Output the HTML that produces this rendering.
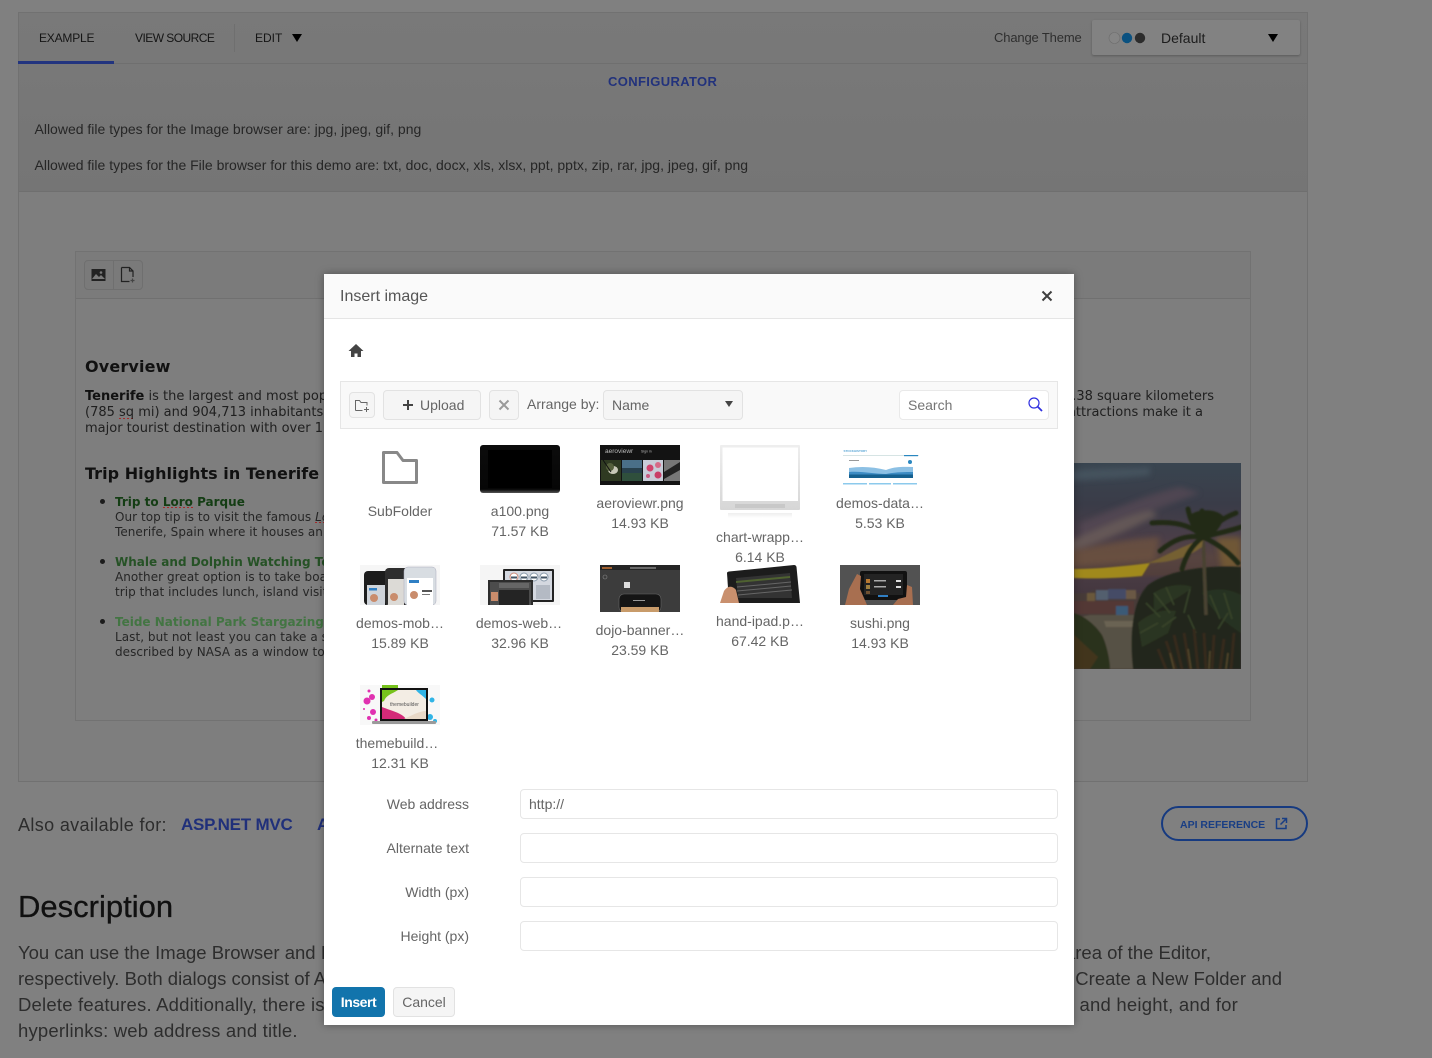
<!DOCTYPE html>
<html lang="en"><head><meta charset="utf-8"><title>Insert image</title>
<style>
html,body{margin:0;padding:0;width:1432px;height:1058px;overflow:hidden;background:#808080}
body{position:relative;font-family:"Liberation Sans",Arial,sans-serif;color:#333}
.a{position:absolute;box-sizing:border-box}
.t{position:absolute;white-space:nowrap;line-height:20px;height:20px}
.v{font-family:"DejaVu Sans",Verdana,sans-serif}
.sp{background:repeating-linear-gradient(90deg,#a52a2a 0 2px,transparent 2px 4px) 0 calc(100% - 1px)/100% 1px no-repeat}
.m{color:#656565;font-size:14px;text-align:center;width:110px}
.lb{color:#656565;font-size:14px;text-align:right;width:140px;left:329px}
.inp{position:absolute;left:520px;width:538px;height:30px;border:1px solid #e6e6e6;border-radius:4px;background:#fff;box-sizing:border-box}
.btn{position:absolute;box-sizing:border-box;border:1px solid #e2e2e2;border-radius:4px;background:#f5f5f5}
svg{position:absolute;display:block}
.th{filter:blur(.35px)}
</style></head>
<body>
<!-- background page -->
<div class="a" style="left:18px;top:12px;width:1290px;height:770px;border:1px solid #717171;background:#7e7e7e"></div>
<div class="a" style="left:19px;top:13px;width:1288px;height:179px;background:linear-gradient(#797979,#757575);border-bottom:1px solid #6f6f6f"></div>
<div class="a" style="left:19px;top:63px;width:1288px;height:1px;background:#6f6f6f"></div>
<div class="a" style="left:18px;top:61px;width:96px;height:3px;background:#22347f"></div>
<div class="a" style="left:234px;top:24px;width:1px;height:28px;background:#6f6f6f"></div>
<div class="t" style="left:39px;top:28px;font-size:12px;color:#151515;letter-spacing:-.2px">EXAMPLE</div>
<div class="t" style="left:135px;top:28px;font-size:12px;color:#151515;letter-spacing:-.55px">VIEW SOURCE</div>
<div class="t" style="left:255px;top:28px;font-size:12px;color:#151515">EDIT</div>
<svg style="left:291px;top:33px" width="12" height="10"><path d="M1 1h10l-5 8z" fill="#000"/></svg>
<div class="t" style="left:608px;top:72px;font-size:13px;font-weight:bold;color:#22327c;letter-spacing:.36px">CONFIGURATOR</div>
<div class="t" style="left:34.500px;top:119px;font-size:14px;color:#262626">Allowed file types for the Image browser are: jpg, jpeg, gif, png</div>
<div class="t" style="left:34.500px;top:155px;font-size:14px;color:#262626">Allowed file types for the File browser for this demo are: txt, doc, docx, xls, xlsx, ppt, pptx, zip, rar, jpg, jpeg, gif, png</div>
<div class="t" style="left:994px;top:28px;font-size:13px;color:#2e2e2e;letter-spacing:-.15px">Change Theme</div>
<div class="a" style="left:1092px;top:20px;width:208px;height:35px;background:#828282;border-radius:2px;box-shadow:0 1px 2px rgba(0,0,0,.25)"></div>
<svg style="left:1107px;top:31px" width="40" height="14"><circle cx="7.500" cy="7" r="5.500" fill="#858585" stroke="#6e6e6e" stroke-width=".6"/><circle cx="20" cy="7" r="5.200" fill="#0a5180"/><circle cx="33" cy="7" r="5.200" fill="#2c2c2c"/></svg>
<div class="t" style="left:1161px;top:28px;font-size:14px;color:#1c1c1c">Default</div>
<svg style="left:1267px;top:33px" width="12" height="10"><path d="M1 1h10l-5 8z" fill="#000"/></svg>

<!-- editor -->
<div class="a" style="left:75px;top:251px;width:1176px;height:470px;border:1px solid #727272"></div>
<div class="a" style="left:76px;top:252px;width:1174px;height:47px;background:#7b7b7b;border-bottom:1px solid #707070"></div>
<div class="a" style="left:84px;top:260px;width:59px;height:30px;background:#7a7a7a;border:1px solid #6f6f6f;border-radius:4px"></div>
<div class="a" style="left:113px;top:261px;width:1px;height:28px;background:#6f6f6f"></div>
<svg style="left:90px;top:267px" width="18" height="16"><rect x="1.500" y="2" width="14" height="12" fill="#222"/><circle cx="11" cy="5.500" r="1.300" fill="#7a7a7a"/><path d="M2 12l4-5 3 3 2-2 4 4z" fill="#7a7a7a"/></svg>
<svg style="left:119px;top:266px" width="20" height="18" fill="none" stroke="#222" stroke-width="1.200"><path d="M2.500 1.500h8l3.500 3.500v6M2.500 1.500v14h8M10.500 1.500v3.500h3.500"/><path d="M13.500 12.500v4M11.500 14.500h4" stroke="#444"/></svg>

<div class="t v" style="left:85px;top:357px;font-size:16px;font-weight:bold;color:#111;letter-spacing:.15px">Overview</div>
<div class="t v" style="left:85px;top:387px;font-size:13px;color:#1f1f1f"><b style="color:#111">Tenerife</b> is the largest and most populous island</div>
<div class="t v" style="left:85px;top:403px;font-size:13px;color:#1f1f1f">(785 <span class="sp">sq</span> mi) and 904,713 inhabitants, it is</div>
<div class="t v" style="left:85px;top:419px;font-size:13px;color:#1f1f1f">major tourist destination with over 1</div>
<div class="t v" style="left:85px;top:464px;font-size:16px;font-weight:bold;color:#111;letter-spacing:.03px">Trip Highlights in Tenerife</div>
<div class="a" style="left:100px;top:499px;width:5px;height:5px;border-radius:50%;background:#1c1c1c"></div>
<div class="t v" style="left:115px;top:492px;font-size:12px;font-weight:bold;color:#143d14">Trip to <span class="sp">Loro</span> Parque</div>
<div class="t v" style="left:115px;top:507px;font-size:12px;color:#262626;letter-spacing:.05px">Our top tip is to visit the famous <i class="sp">Loro</i></div>
<div class="t v" style="left:115px;top:522px;font-size:12px;color:#262626;letter-spacing:.05px">Tenerife, Spain where it houses an</div>
<div class="a" style="left:100px;top:559px;width:5px;height:5px;border-radius:50%;background:#1c1c1c"></div>
<div class="t v" style="left:115px;top:552px;font-size:12px;font-weight:bold;color:#265226">Whale and Dolphin Watching Tour</div>
<div class="t v" style="left:115px;top:567px;font-size:12px;color:#262626;letter-spacing:.05px">Another great option is to take boat</div>
<div class="t v" style="left:115px;top:582px;font-size:12px;color:#262626;letter-spacing:.05px">trip that includes lunch, island visit</div>
<div class="a" style="left:100px;top:619px;width:5px;height:5px;border-radius:50%;background:#1c1c1c"></div>
<div class="t v" style="left:115px;top:612px;font-size:12px;font-weight:bold;color:#437543">Teide National Park Stargazing</div>
<div class="t v" style="left:115px;top:627px;font-size:12px;color:#262626;letter-spacing:.05px">Last, but not least you can take a s</div>
<div class="t v" style="left:115px;top:642px;font-size:12px;color:#262626;letter-spacing:.05px">described by NASA as a window to</div>
<div class="t v" style="right:218px;top:387px;font-size:13px;color:#1f1f1f">2,034.38 square kilometers</div>
<div class="t v" style="right:229px;top:403px;font-size:13px;color:#1f1f1f">attractions make it a</div>

<!-- landscape -->
<svg style="left:1070px;top:463px" width="171" height="206" viewBox="0 0 171 206">
<defs><linearGradient id="sky" gradientUnits="userSpaceOnUse" x1="0" y1="0" x2="0" y2="206"><stop offset="0" stop-color="#394550"/><stop offset=".2" stop-color="#3a3c48"/><stop offset=".36" stop-color="#4a3e48"/><stop offset=".46" stop-color="#574440"/><stop offset=".54" stop-color="#523f3c"/><stop offset=".56" stop-color="#483a42"/><stop offset=".65" stop-color="#43373f"/><stop offset="1" stop-color="#3f3532"/></linearGradient>
<filter id="b"><feGaussianBlur stdDeviation="3"/></filter><filter id="b1"><feGaussianBlur stdDeviation=".9"/></filter></defs>
<rect width="171" height="206" fill="url(#sky)"/>
<g filter="url(#b)" opacity=".75"><path d="M0 8C30 4 60 6 80 4V12C50 16 25 16 0 18z" fill="#4a5864"/><path d="M10 60C40 48 80 30 110 24L130 30C90 44 50 62 10 74z" fill="#564a55"/><path d="M0 78C30 66 55 52 80 48L88 52C60 66 30 80 0 88z" fill="#6e605c"/><path d="M0 88C25 84 55 76 90 74L84 98C50 100 25 102 0 104z" fill="#6e5240"/><path d="M146 74H171V106H152z" fill="#7a5f30"/></g>
<path d="M4 106C30 106 55 103 80 100L72 113C50 115 25 116 4 115z" fill="#a0891a" filter="url(#b1)"/>
<g filter="url(#b1)">
<path d="M0 206V130h18l6-3h30l6 3h10v76z" fill="#463b39"/>
<rect x="17" y="130" width="8" height="10" fill="#6a583a"/><rect x="26" y="127" width="12" height="10" fill="#525e6e"/><rect x="38" y="126" width="18" height="10" fill="#444c66"/><rect x="56" y="127" width="10" height="9" fill="#6a5844"/>
<path d="M4 138h60v13H4z" fill="#523934"/><rect x="46" y="143" width="12" height="9" fill="#3a5a76"/>
<path d="M20 152h50l10 54H0V156z" fill="#575145"/>
<path d="M34 158h32l4 6H36z" fill="#6b6453"/>
<path d="M4 206V150C12 152 24 160 32 172 36 180 40 196 40 206z" fill="#2a301c"/>
<path d="M4 172l24 22-8 12H4z" fill="#43361e"/>
<path d="M63 206C60 180 60 140 78 122 100 106 140 102 171 104V206z" fill="#22281a"/>
<path d="M84 130C96 122 112 120 122 124 112 134 98 138 84 150z" fill="#2b3522"/>
<path d="M132 130C146 124 160 126 171 132V170C155 160 142 148 132 130z" fill="#273220"/>
<path d="M68 160C80 150 92 146 106 148L98 170 72 184z" fill="#2a3521"/>
<g fill="none" stroke="#39452c" stroke-width="1.500"><path d="M76 140l14 14M84 130l16 20M96 124l8 18M120 126l-6 24M140 132l10 24M154 130l8 26M70 170l18-10M92 164l14-10M118 152l8 18M158 150l-10 16"/></g>
<path d="M96 178l10 28M104 172l8 34M114 170l6 36M124 166l4 40M134 170l2 36M144 172l-2 34M154 176l-4 30M164 170l-3 36M88 186l8 20" stroke="#36291a" stroke-width="3"/>
<path d="M100 190l4 16M118 186l3 20M140 188l-1 18M158 190l-2 16" stroke="#54462a" stroke-width="1.500"/>
<path d="M133 70l3 82" stroke="#484330" stroke-width="3.500"/>
<path d="M78 100C90 96 110 84 133 76L132 84C116 96 96 100 78 100z" fill="#756030"/>
<g fill="none" stroke="#232913" stroke-width="5" stroke-linecap="round">
<path d="M133 74C122 62 104 58 82 60"/><path d="M133 74C124 66 120 56 118 46"/><path d="M133 74C134 64 136 54 132 48"/><path d="M133 74C142 64 150 56 166 50"/><path d="M133 74C148 70 160 68 171 64"/><path d="M133 74C116 72 104 76 90 88"/><path d="M133 74C146 80 158 88 168 100"/><path d="M133 74C122 82 116 92 112 106"/>
</g>
<path d="M118 54C124 46 146 44 154 54 150 68 140 76 130 76 124 70 120 62 118 54z" fill="#232913"/>
</g>
</svg>

<!-- lower page -->
<div class="t" style="left:18px;top:815px;font-size:18px;color:#2d2d2d;letter-spacing:.36px">Also available for:</div>
<div class="t" style="left:181px;top:815px;font-size:17px;font-weight:bold;color:#20307a;letter-spacing:-.22px">ASP.NET MVC</div>
<div class="t" style="left:317px;top:815px;font-size:17px;font-weight:bold;color:#20307a">A</div>
<div class="a" style="left:1161px;top:806px;width:147px;height:35px;border:2px solid #163a80;border-radius:18px"></div>
<div class="t" style="left:1180px;top:815px;font-size:10.500px;font-weight:bold;color:#193e84">API REFERENCE</div>
<svg style="left:1275px;top:817px" width="13" height="13" fill="none" stroke="#193e84" stroke-width="1.500"><path d="M5 2H1.500v9.500H11V8"/><path d="M5.500 7.500L11 2M7 1.500h4.500V6"/></svg>
<div class="t" style="left:18px;top:889px;height:36px;line-height:36px;font-size:31px;color:#101010;-webkit-text-stroke:.3px #101010">Description</div>
<div class="t" style="left:18px;top:943px;font-size:18.500px;color:#2d2d2d">You can use the Image Browser and Image</div>
<div class="t" style="left:18px;top:969px;font-size:18.500px;color:#2d2d2d">respectively. Both dialogs consist of A</div>
<div class="t" style="left:18px;top:995px;font-size:18.500px;color:#2d2d2d;letter-spacing:.2px">Delete features. Additionally, there is</div>
<div class="t" style="left:18px;top:1021px;font-size:18.500px;color:#2d2d2d;letter-spacing:.18px">hyperlinks: web address and title.</div>
<div class="t" style="right:221px;top:943px;font-size:18.500px;color:#2d2d2d">the area of the Editor,</div>
<div class="t" style="right:150px;top:969px;font-size:18.500px;color:#2d2d2d">Create a New Folder and</div>
<div class="t" style="right:194px;top:995px;font-size:18.500px;color:#2d2d2d;letter-spacing:.22px">and height, and for</div>

<!-- modal -->
<div class="a" style="left:324px;top:274px;width:750px;height:751px;background:#fff;box-shadow:0 0 8px rgba(0,0,0,.35)"></div>
<div class="a" style="left:324px;top:274px;width:750px;height:45px;background:#fafafa;border-bottom:1px solid #e5e5e5"></div>
<div class="t" style="left:340px;top:287px;font-size:16px;color:#555">Insert image</div>
<svg style="left:1040px;top:289px" width="14" height="14" stroke="#3f3f3f" stroke-width="2"><path d="M2.500 2.500l9 9M11.500 2.500l-9 9"/></svg>
<svg style="left:348px;top:343px" width="16" height="15"><path d="M8 1L.5 8H3v6h3.500v-3.500h3V14H13V8h2.500z" fill="#444"/></svg>

<div class="a" style="left:340px;top:381px;width:718px;height:48px;background:#f9f9f9;border:1px solid #e6e6e6"></div>
<div class="btn" style="left:349px;top:392px;width:26px;height:26px"></div>
<svg style="left:354px;top:398px" width="17" height="15" fill="none" stroke="#666" stroke-width="1"><path d="M1.500 12.500v-10h4l1.500 2h6v3M1.500 12.500h7"/><path d="M12.500 9v5M10 11.500h5"/></svg>
<div class="btn" style="left:383px;top:390px;width:98px;height:30px"></div>
<svg style="left:402px;top:399px" width="12" height="12"><path d="M6 1v10M1 6h10" stroke="#444" stroke-width="2"/></svg>
<div class="t" style="left:420px;top:395px;font-size:14px;color:#656565">Upload</div>
<div class="btn" style="left:489px;top:390px;width:30px;height:30px"></div>
<svg style="left:498px;top:399px" width="12" height="12" stroke="#9a9a9a" stroke-width="2"><path d="M1.500 1.500l9 9M10.500 1.500l-9 9"/></svg>
<div class="t" style="left:527px;top:394px;font-size:14px;color:#656565">Arrange by:</div>
<div class="btn" style="left:603px;top:390px;width:140px;height:30px"></div>
<div class="t" style="left:612px;top:395px;font-size:14px;color:#656565">Name</div>
<svg style="left:724px;top:400px" width="10" height="8"><path d="M1 1h8l-4 6z" fill="#444"/></svg>
<div class="a" style="left:899px;top:390px;width:150px;height:30px;background:#fff;border:1px solid #e9e9e9;border-radius:4px"></div>
<div class="t" style="left:908px;top:395px;font-size:14px;color:#757575">Search</div>
<svg style="left:1027px;top:396px" width="17" height="18" fill="none" stroke="#3030e0"><circle cx="7" cy="7" r="5" stroke-width="1.200"/><path d="M10.500 10.500l4.500 4.500" stroke-width="1.800"/></svg>

<!-- file items -->
<svg style="left:380px;top:449px" width="40" height="38" fill="none" stroke="#888" stroke-width="3" stroke-linejoin="round"><path d="M3.500 3.500H17l6 8H36.500V33.500H3.500z"/></svg>
<div class="t m" style="left:345px;top:501px">SubFolder</div>

<svg class="th" style="left:480px;top:445px" width="80" height="48"><defs><linearGradient id="ta" x1="0" y1="0" x2="0" y2="1"><stop offset="0" stop-color="#0c0c0c"/><stop offset=".92" stop-color="#060606"/><stop offset="1" stop-color="#555"/></linearGradient></defs><rect width="80" height="48" rx="3" fill="url(#ta)"/><rect x="8" y="5" width="64" height="38" fill="#000"/></svg>
<div class="t m" style="left:465px;top:501px">a100.png</div><div class="t m" style="left:465px;top:521px">71.57 KB</div>

<svg class="th" style="left:600px;top:445px" width="80" height="40"><rect width="80" height="40" fill="#131313"/><text x="5" y="8" font-size="6.500" fill="#bbb" font-family="Liberation Sans">aeroviewr</text><text x="41" y="7.500" font-size="3.500" fill="#bbb" font-family="Liberation Sans">Sign in</text><rect x="1" y="15" width="20" height="21" fill="#2f3a22"/><ellipse cx="13" cy="25" rx="5" ry="4" fill="#c8c8b8"/><circle cx="10" cy="22" r="4" fill="#55603c"/><path d="M3 15l8 12" stroke="#111"/><rect x="22" y="15" width="20" height="21" fill="#4a6f88"/><rect x="22" y="23" width="20" height="5" fill="#28404c"/><rect x="22" y="28" width="20" height="8" fill="#2f4f3c"/><rect x="43" y="15" width="20" height="21" fill="#c8ccd8"/><circle cx="50" cy="23" r="3.500" fill="#d0446e"/><circle cx="58" cy="30" r="3.500" fill="#c93f68"/><circle cx="58" cy="20" r="3" fill="#d66a88"/><circle cx="48" cy="31" r="2" fill="#c85a80"/><rect x="64" y="15" width="16" height="21" fill="#777"/><path d="M64 27l16-10v8l-16 9z" fill="#222"/></svg>
<div class="t m" style="left:585px;top:493px">aeroviewr.png</div><div class="t m" style="left:585px;top:513px">14.93 KB</div>

<svg class="th" style="left:720px;top:445px" width="80" height="73"><defs><linearGradient id="ts" x1="0" y1="0" x2="0" y2="1"><stop offset="0" stop-color="#eee"/><stop offset="1" stop-color="#fff"/></linearGradient><linearGradient id="tm" x1="0" y1="0" x2="0" y2="1"><stop offset="0" stop-color="#eeeeee"/><stop offset="1" stop-color="#d6d6d6"/></linearGradient></defs><rect width="80" height="65" rx="1" fill="url(#tm)"/><rect x="2.500" y="2.500" width="75.500" height="53.500" fill="#fff"/><rect x="15" y="59" width="50" height="4" fill="#c8c8c8"/><rect x="8" y="68" width="64" height="5" fill="url(#ts)"/></svg>
<div class="t m" style="left:705px;top:527px">chart-wrapp…</div><div class="t m" style="left:705px;top:547px">6.14 KB</div>

<svg class="th" style="left:840px;top:447px" width="80" height="38"><rect x="3" y="1" width="76" height="37" fill="#fff"/><text x="3.500" y="5" font-size="3" fill="#5aa6d6" font-weight="bold" font-family="Liberation Sans">STOCKHISTORY</text><rect x="3" y="8" width="76" height=".8" fill="#cdd"/><rect x="64" y="8" width="14" height="1.200" fill="#2a87c0"/><rect x="9" y="13" width="10" height="1" fill="#999"/><circle cx="70" cy="15" r="2" fill="#2a87c0"/><path d="M9 21C22 19 34 20 46 23 56 19 65 20 73 20V31H9z" fill="#8cc0e4"/><path d="M9 25C22 24 34 27 46 27 56 25 65 25 73 25V31H9z" fill="#3d8cc4"/><path d="M9 27.500H73V31H9z" fill="#15608f"/><rect x="3" y="36" width="24" height="1.500" fill="#8ccaec"/><rect x="29" y="36" width="22" height="1.500" fill="#8ccaec"/><rect x="53" y="36" width="24" height="1.500" fill="#8ccaec"/></svg>
<div class="t m" style="left:825px;top:493px">demos-data…</div><div class="t m" style="left:825px;top:513px">5.53 KB</div>

<svg class="th" style="left:360px;top:565px" width="80" height="40"><rect width="80" height="40" fill="#f6f6f6"/><rect x="4" y="6" width="26" height="34" rx="4" fill="#1c1c1c"/><rect x="7" y="20" width="18" height="20" fill="#cfd4da"/><rect x="25" y="3" width="24" height="37" rx="4" fill="#2e2e2e"/><rect x="28" y="14" width="16" height="26" fill="#dcdad6"/><circle cx="34" cy="32" r="4" fill="#c98c6c"/><rect x="44" y="2" width="32" height="38" rx="4" fill="#d8dde2" stroke="#aab" stroke-width=".5"/><rect x="47" y="13" width="26" height="27" fill="#fff"/><rect x="49" y="15" width="10" height="3" fill="#2f7fc4"/><circle cx="54" cy="30" r="4" fill="#c98c6c"/><rect x="62" y="25" width="10" height="2" fill="#555"/><rect x="62" y="29" width="8" height="1" fill="#777"/><rect x="9" y="23" width="8" height="2.500" fill="#2f7fc4"/><circle cx="14" cy="33" r="4" fill="#c98c6c"/></svg>
<div class="t m" style="left:345px;top:613px">demos-mob…</div><div class="t m" style="left:345px;top:633px">15.89 KB</div>

<svg class="th" style="left:480px;top:565px" width="80" height="40"><rect width="80" height="40" fill="#f5f5f5"/><rect x="23" y="4" width="51" height="33" rx="1" fill="#222"/><rect x="25" y="6" width="47" height="29" fill="#d4d8e0"/><circle cx="34" cy="12" r="4" fill="#fff" stroke="#c87"/><circle cx="44" cy="12" r="4" fill="#fff" stroke="#89a"/><circle cx="54" cy="12" r="4" fill="#fff" stroke="#89a"/><circle cx="64" cy="12" r="4" fill="#fff" stroke="#89a"/><path d="M31 12.500h6M41 12.500h6M51 12.500h6M61 12.500h6" stroke="#456" stroke-width="2"/><rect x="8" y="15" width="45" height="25" fill="#2c2c2c"/><rect x="10" y="17" width="41" height="23" fill="#4c4c4c"/><rect x="19" y="25" width="30" height="15" fill="#242424"/><rect x="19" y="18" width="30" height="5" fill="#666"/><rect x="11" y="27" width="7" height="9" fill="#c98c6c"/><rect x="56" y="20" width="14" height="14" fill="#b4bac4"/></svg>
<div class="t m" style="left:464px;top:613px">demos-web…</div><div class="t m" style="left:465px;top:633px">32.96 KB</div>

<svg class="th" style="left:600px;top:565px" width="80" height="47"><rect width="80" height="47" fill="#3c3c3c"/><rect width="80" height="5" fill="#242424"/><rect x="30" y="2" width="26" height="2" fill="#6a6a6a"/><rect x="2" y="2" width="10" height="2" fill="#a06030"/><circle cx="5" cy="12" r="2" fill="none" stroke="#888" stroke-width=".6"/><rect x="24" y="17" width="6" height="6" fill="#ddd"/><rect x="19" y="29" width="42" height="18" rx="5" fill="#151515" stroke="#666" stroke-width=".6"/><rect x="21" y="42" width="38" height="5" fill="#c89b6a"/><rect x="33" y="35" width="12" height="1" fill="#999"/></svg>
<div class="t m" style="left:585px;top:620px">dojo-banner…</div><div class="t m" style="left:585px;top:640px">23.59 KB</div>

<svg class="th" style="left:720px;top:565px" width="80" height="38"><path d="M7 8Q7 7 9 6.500L74 0Q76 0 76.500 2L80 38H9z" fill="#1c1c1c"/><path d="M16 13L70 8 72 33H18z" fill="#333"/><path d="M16 16L70 11V13L16 18z" fill="#4f6230"/><path d="M17 22L71 17M17 26L71 21M18 30L72 25" stroke="#666" stroke-width="1"/><path d="M0 38L4 26C8 20 13 21 16 25L19 38z" fill="#c9906e"/></svg>
<div class="t m" style="left:705px;top:611px">hand-ipad.p…</div><div class="t m" style="left:705px;top:631px">67.42 KB</div>

<svg class="th" style="left:840px;top:565px" width="80" height="40"><rect width="80" height="40" fill="#525252"/><rect x="20" y="6" width="47" height="29" rx="2" fill="#111"/><rect x="24" y="9" width="39" height="21" fill="#232323"/><rect x="26" y="14" width="4" height="4" fill="#b87830"/><rect x="26" y="20" width="4" height="4" fill="#a08040"/><rect x="26" y="26" width="4" height="3" fill="#705030"/><rect x="34" y="15" width="12" height="1.500" fill="#aaa"/><rect x="34" y="21" width="12" height="1.500" fill="#aaa"/><rect x="56" y="15" width="5" height="2" fill="#ddd"/><rect x="56" y="21" width="5" height="2" fill="#ddd"/><rect x="38" y="30" width="10" height="2" fill="#2f7fc4"/><path d="M5 40L9 24 17 9 21 11 20 24 24 33 27 40z" fill="#a86f50"/><path d="M53 40L58 34 66 32 67 20 72 22 73 40z" fill="#a86f50"/></svg>
<div class="t m" style="left:825px;top:613px">sushi.png</div><div class="t m" style="left:825px;top:633px">14.93 KB</div>

<svg class="th" style="left:360px;top:685px" width="80" height="40"><rect width="80" height="40" fill="#f8f8f8"/><g fill="#e030b0"><circle cx="7" cy="16" r="3.500"/><circle cx="12" cy="12" r="3"/><circle cx="9" cy="6" r="1.500"/><circle cx="13" cy="27" r="3"/><circle cx="9" cy="33" r="2"/><circle cx="16" cy="35" r="1.500"/><circle cx="4" cy="24" r="1"/></g><path d="M22 0h16v4H22z" fill="#77c21c"/><g fill="#30b4e6"><circle cx="72" cy="15" r="2.500"/><circle cx="70" cy="32" r="3"/><circle cx="75" cy="36" r="2"/><path d="M50 4l18-1-2 5z"/></g><rect x="20" y="3" width="48" height="33" fill="#111"/><rect x="22" y="5" width="44" height="29" fill="#f3ede4"/><path d="M22 5H38C32 9 26 10 24 16L22 17z" fill="#77c21c"/><path d="M22 22C32 26 42 28 46 34H22z" fill="#d32a78"/><path d="M56 5H66V14C62 10 58 8 56 5z" fill="#30b4e6"/><path d="M44 34C52 30 60 26 66 26V34z" fill="#e9d9c7"/><text x="30" y="21" font-size="5" fill="#555" font-family="Liberation Sans">themebuilder</text><rect x="12" y="36" width="64" height="3" rx="1" fill="#9a9a9a"/></svg>
<div class="t m" style="left:342px;top:733px">themebuild…</div><div class="t m" style="left:345px;top:753px">12.31 KB</div>

<!-- form -->
<div class="t lb" style="top:794px">Web address</div><div class="inp" style="top:789px"></div>
<div class="t" style="left:529px;top:794px;font-size:14px;color:#656565">http://</div>
<div class="t lb" style="top:838px">Alternate text</div><div class="inp" style="top:833px"></div>
<div class="t lb" style="top:882px">Width (px)</div><div class="inp" style="top:877px"></div>
<div class="t lb" style="top:926px">Height (px)</div><div class="inp" style="top:921px"></div>

<div class="a" style="left:332px;top:987px;width:53px;height:30px;background:#1274ac;border-radius:4px"></div>
<div class="t" style="left:332px;top:992px;width:53px;text-align:center;font-size:14px;color:#fff;font-weight:bold;letter-spacing:-.45px">Insert</div>
<div class="btn" style="left:393px;top:987px;width:62px;height:30px"></div>
<div class="t" style="left:393px;top:992px;width:62px;text-align:center;font-size:14px;color:#656565">Cancel</div>
</body></html>
